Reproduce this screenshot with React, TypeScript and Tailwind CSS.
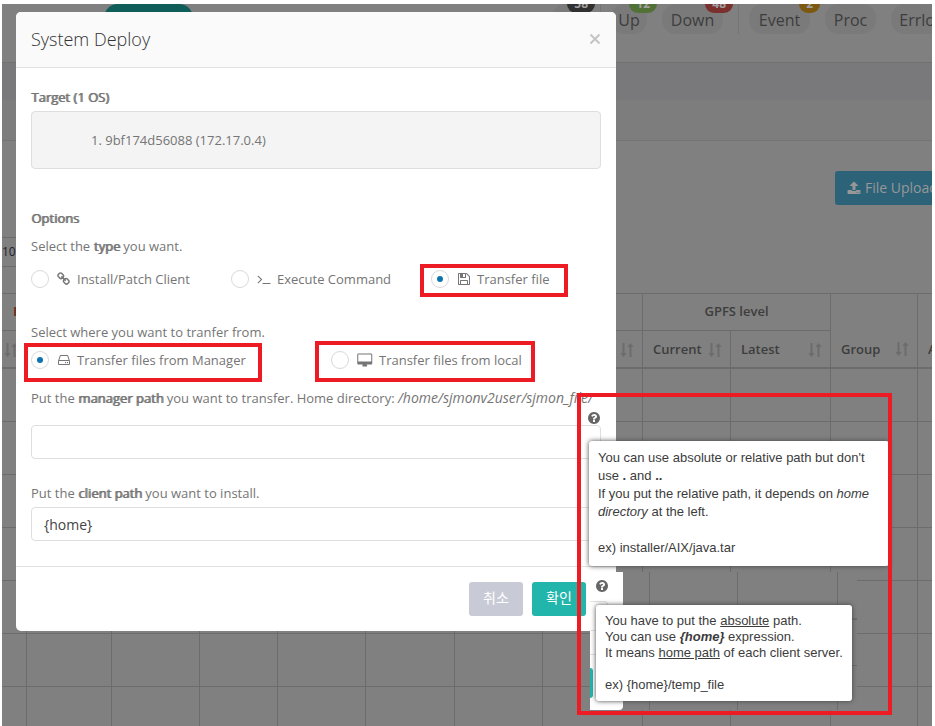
import React from "react";

const ICONS = {
  link: "M1456 1216q0-40-28-68l-208-208q-28-28-68-28-42 0-72 32 3 3 19 18.5t21.5 21.5 15 19 13 25.5 3.5 27.5q0 40-28 68t-68 28q-15 0-27.5-3.5t-25.5-13-19-15-21.5-21.5-18.5-19q-33 31-33 73 0 40 28 68l206 207q27 27 68 27 40 0 68-26l147-146q28-28 28-67zm-703-705q0-40-28-68l-206-207q-28-28-68-28-39 0-68 27l-147 146q-28 28-28 67 0 40 28 68l208 208q27 27 68 27 42 0 72-31-3-3-19-18.5t-21.5-21.5-15-19-13-25.5-3.5-27.5q0-40 28-68t68-28q15 0 27.5 3.5t25.5 13 19 15 21.5 21.5 18.5 19q33-31 33-73zm895 705q0 120-85 203l-147 146q-83 83-203 83-121 0-204-85l-206-207q-83-83-83-203 0-123 88-209l-88-88q-86 88-208 88-120 0-204-84l-208-208q-84-84-84-204t85-203l147-146q83-83 203-83 121 0 204 85l206 207q83 83 83 203 0 123-88 209l88 88q86-88 208-88 120 0 204 84l208 208q84 84 84 204z",
  terminal: "M649 983l-466 466q-10 10-23 10t-23-10l-50-50q-10-10-10-23t10-23l393-393-393-393q-10-10-10-23t10-23l50-50q10-10 23-10t23 10l466 466q10 10 10 23t-10 23zm1079 457v64q0 14-9 23t-23 9h-960q-14 0-23-9t-9-23v-64q0-14 9-23t23-9h960q14 0 23 9t9 23z",
  floppy: "M512 1536h768v-384h-768v384zm896 0h128v-896q0-14-10-38.5t-20-34.5l-281-281q-10-10-34-20t-39-10v416q0 40-28 68t-68 28h-576q-40 0-68-28t-28-68v-416h-128v1280h128v-416q0-40 28-68t68-28h832q40 0 68 28t28 68v416zm-384-928v-320q0-13-9.5-22.5t-22.5-9.5h-192q-13 0-22.5 9.5t-9.5 22.5v320q0 13 9.5 22.5t22.5 9.5h192q13 0 22.5-9.5t9.5-22.5zm640 32v928q0 40-28 68t-68 28h-1344q-40 0-68-28t-28-68v-1344q0-40 28-68t68-28h928q40 0 88 20t76 48l280 280q28 28 48 76t20 88z",
  hdd: "M1168 1216q0 33-23.5 56.5t-56.5 23.5-56.5-23.5-23.5-56.5 23.5-56.5 56.5-23.5 56.5 23.5 23.5 56.5zm256 0q0 33-23.5 56.5t-56.5 23.5-56.5-23.5-23.5-56.5 23.5-56.5 56.5-23.5 56.5 23.5 23.5 56.5zm112 160v-320q0-13-9.5-22.5t-22.5-9.5h-1216q-13 0-22.5 9.5t-9.5 22.5v320q0 13 9.5 22.5t22.5 9.5h1216q13 0 22.5-9.5t9.5-22.5zm-1230-480h1180l-157-482q-4-13-16-21.5t-26-8.5h-782q-14 0-26 8.5t-16 21.5zm1358 160v320q0 66-47 113t-113 47h-1216q-66 0-113-47t-47-113v-320q0-25 16-75l197-606q17-53 63-86t101-33h782q55 0 101 33t63 86l197 606q16 50 16 75z",
  desktop: "M1728 992v-832q0-13-9.500-22.500t-22.500-9.500h-1600q-13 0-22.500 9.500t-9.500 22.500v832q0 13 9.500 22.500t22.500 9.500h1600q13 0 22.500-9.500t9.500-22.500zm128-832v1088q0 66-47 113t-113 47h-544q0 37 16 77.500t32 71 16 43.500q0 26-19 45t-45 19h-512q-26 0-45-19t-19-45q0-14 16-44t32-70 16-78h-544q-66 0-113-47t-47-113v-1088q0-66 47-113t113-47h1600q66 0 113 47t47 113z",
  question: "M1024 1376v-192q0-14-9-23t-23-9h-192q-14 0-23 9t-9 23v192q0 14 9 23t23 9h192q14 0 23-9t9-23zm256-672q0-88-55.500-163t-138.500-116-170-41q-243 0-371 213-15 24 8 42l132 100q7 6 19 6 16 0 25-12 53-68 86-92 34-24 86-24 48 0 85.500 26t37.500 59q0 38-20 61t-68 45q-63 28-115.500 86.500t-52.500 125.500v36q0 14 9 23t23 9h192q14 0 23-9t9-23q0-19 21.500-49.500t54.500-49.500q32-18 49-28.500t46-35 44.500-48 28-60.500 12.500-81zm384 192q0 209-103 385.500t-279.500 279.500-385.500 103-385.500-103-279.500-279.500-103-385.500 103-385.500 279.500-279.500 385.500-103 385.500 103 279.500 279.500 103 385.500z",
  upload: "M1344 1472q0-26-19-45t-45-19-45 19-19 45 19 45 45 19 45-19 19-45zm256 0q0-26-19-45t-45-19-45 19-19 45 19 45 45 19 45-19 19-45zm128-224v320q0 40-28 68t-68 28h-1472q-40 0-68-28t-28-68v-320q0-40 28-68t68-28h427q21 56 70.500 92t110.500 36h256q61 0 110.500-36t70.500-92h427q40 0 68 28t28 68zm-325-648q-17 40-59 40h-256v448q0 26-19 45t-45 19h-256q-26 0-45-19t-19-45v-448h-256q-42 0-59-40-17-39 14-69l448-448q18-19 45-19t45 19l448 448q31 30 14 69z",
};

function Icon({ name, className, box = "0 0 1792 1792" }: { name: keyof typeof ICONS; className: string; box?: string }) {
  return (
    <svg viewBox={box} fill="currentColor" aria-hidden="true" className={className}>
      <path d={ICONS[name]} />
    </svg>
  );
}

function SortIcon() {
  return (
    <svg viewBox="0 0 14 14" fill="#6c6c6c" aria-hidden="true" className="ml-auto size-3.5 shrink-0">
      <path d="M2.500 0h2v10h2.200L3.500 14 .3 10h2.200zM9.500 14h2V4h2.200L10.500 0 7.300 4h2.200z" />
    </svg>
  );
}

function NavPill({ label, badge, width, color = "" }: { label: string; badge?: string; width: string; color?: string }) {
  return (
    <button type="button" className={"relative h-[30px] shrink-0 rounded-[14px] bg-[#7a7a7a] pt-0.5 " + width}>
      <span>{label}</span>
      {badge && (
        <span className={"absolute -top-[9px] right-[-10px] rounded-full px-[7px] text-xs leading-[18px] font-bold text-[#a0a0a0] " + color}>
          {badge}
        </span>
      )}
    </button>
  );
}

const mark = "pointer-events-none absolute border-4 border-[#ed1c24]";
const strong = "font-normal [text-shadow:1px_0_0_#757575]";

function Choice(props: {
  group: string;
  label: string;
  icon: keyof typeof ICONS;
  box?: string;
  iconClass?: string;
  checked?: boolean;
  width: string;
  markClass?: string;
}) {
  return (
    <label className={"relative flex items-center whitespace-nowrap " + props.width}>
      <input
        type="radio"
        name={props.group}
        defaultChecked={props.checked}
        className="mr-2 grid size-[18px] shrink-0 appearance-none place-content-center rounded-full border border-[#d9d9d9] bg-white before:size-1.5 before:rounded-full before:content-[''] checked:before:bg-[#0c75ab]"
      />
      <Icon name={props.icon} box={props.box} className={props.iconClass ?? "mr-1.5 size-3.5 shrink-0"} />
      {props.label}
      {props.markClass && <span className={mark + " " + props.markClass} />}
    </label>
  );
}

const cell = "border-r border-b border-[#6c6c6c]";
const columns = ["w-[25px]", "w-[85px]", "w-[88px]", "w-[78px]", "w-[88px]", "w-[89px]", "w-[88px]", "w-[100px]", "w-[88px]", "w-[100px]", "w-[87px]", "w-[100px]"];
const rows = [1, 2, 3, 4, 5, 6, 7];

function Backdrop() {
  return (
    <div className="h-full overflow-hidden bg-[#808080] text-[#3d3d3d]">
      <header className="flex h-[59px] items-start overflow-hidden border-b border-[#717171] text-base">
        <div className="ml-[102px] h-[30px] w-[89px] rounded-t-[14px] bg-[#0f5e59]" />
        <nav className="mr-[-20px] ml-auto flex shrink-0 gap-[15px]">
          <NavPill label="" badge="58" width="w-[33px]" color="bg-[#303030]" />
          <div className="flex gap-2.5">
            <div className="h-[30px] w-px bg-[#757575]" />
            <NavPill label="Up" badge="12" width="w-[36px]" color="bg-[#527136]" />
          </div>
          <NavPill label="Down" badge="48" width="w-[61px]" color="bg-[#7b302e]" />
          <div className="flex gap-2.5">
            <div className="h-[30px] w-px bg-[#757575]" />
            <NavPill label="Event" badge="2" width="w-[61px]" color="bg-[#7d5810]" />
          </div>
          <NavPill label="Proc" width="w-[51px]" />
          <NavPill label="Errlog" width="w-[61px]" />
        </nav>
      </header>
      <div className="h-[37px] bg-[#79797c]" />
      <div className="h-[41px] border-b border-[#747474] bg-[#7d7d7d]" />
      <div className="flex justify-end pt-[30px]">
        <button type="button" className="mr-[-25px] flex h-[34px] w-[122px] shrink-0 items-center gap-1 rounded-[3px] bg-[#2c6379] pl-3 text-sm whitespace-nowrap text-[#979797]">
          <Icon name="upload" className="size-3.5" />
          File Upload
        </button>
      </div>
      <select aria-label="Rows per page" className="mt-8 block h-[30px] w-16 appearance-none border-y border-[#6c6c6c] text-xs text-[#20202e]">
        <option>10</option>
      </select>
      <table className="mt-[26px] w-full min-w-[1016px] table-fixed border-separate border-spacing-0 border-t border-[#6c6c6c] text-[13px]">
        <colgroup>
          {columns.map((c, i) => (
            <col key={i} className={c} />
          ))}
        </colgroup>
        <thead className="text-left font-semibold">
          <tr className="h-[37px]">
            <th className={cell + " pl-[11px] text-[#6b3020]"}>P</th>
            <th className={cell} colSpan={7} />
            <th className={cell + " text-center font-semibold"} colSpan={2}>GPFS level</th>
            <th className={cell + " border-b-2 pr-2 pb-2 pl-2.5 align-bottom font-semibold"} rowSpan={2}>
              <div className="flex items-center">Group<SortIcon /></div>
            </th>
            <th className={cell + " border-b-2 pr-2 pb-2 pl-2.5 align-bottom font-semibold"} rowSpan={2}>
              <div className="flex items-center">AIX<SortIcon /></div>
            </th>
          </tr>
          <tr className="h-[38px]">
            {["", "", "", "", "", "", "", "", "Current", "Latest"].map((name, i) => (
              <th key={i} className={cell + " border-b-2 pt-0.5 font-semibold " + (name ? "pr-2 pl-2.5" : "pr-2")}>
                <div className="flex items-center">{name}<SortIcon /></div>
              </th>
            ))}
          </tr>
        </thead>
        <tbody>
          {rows.map((r) => (
            <tr key={r} className="h-[53px]">
              {columns.map((c, i) => (
                <td key={i} className={cell} />
              ))}
            </tr>
          ))}
        </tbody>
      </table>
    </div>
  );
}

const tip = "absolute rounded-[3px] bg-white font-['Liberation_Sans',Arial,sans-serif] text-[13px] text-[#3c3c3c] shadow-[0_0_5px_#444]";
const field = "block h-[34px] w-full rounded border border-[#dedede] bg-white px-3 text-sm text-[#444]";

function DeployDialog() {
  return (
    <section role="dialog" aria-labelledby="dialog-title" className="absolute top-3 left-4 w-[600px] rounded-[5px] bg-white text-[13px] leading-5 text-[#757575]">
      <header className="flex h-14 items-center justify-between rounded-t-[5px] border-b border-[#e2e2e2] bg-[#fafafa] px-[15px] pb-0.5">
        <h1 id="dialog-title" className="text-lg font-light text-[#333]">System Deploy</h1>
        <button type="button" aria-label="Close" className="text-[#c4c4c4]">
          <svg viewBox="0 0 12 12" className="size-3" fill="none" stroke="currentColor" strokeWidth="2">
            <path d="M1.500 1.500l9 9M10.500 1.500l-9 9" />
          </svg>
        </button>
      </header>
      <form className="px-[15px] pt-[19px] pb-[25px]">
        <h2 className={strong}>Target (1 OS)</h2>
        <ol className="mt-1 flex h-[58px] list-inside list-decimal items-center rounded border border-[#dedede] bg-[#f4f4f4] pl-[59px]">
          <li>9bf174d56088 (172.17.0.4)</li>
        </ol>
        <h2 className={"mt-[39px] " + strong}>Options</h2>
        <p className="mt-2">Select the <b className={strong}>type</b> you want.</p>
        <div className="mt-[13px] flex h-5">
          <Choice group="type" label="Install/Patch Client" icon="link" width="w-[200px]" />
          <Choice group="type" label="Execute Command" icon="terminal" width="w-[200px]" />
          <Choice group="type" label="Transfer file" icon="floppy" width="w-[118px]" checked markClass="-top-[5px] -left-[11px] h-[33px] w-[148px]" />
        </div>
        <p className="mt-[33px]">Select where you want to tranfer from.</p>
        <div className="mt-2 flex h-5">
          <Choice group="source" label="Transfer files from Manager" icon="hdd" width="w-[300px]" checked markClass="-top-[7px] -left-[7px] h-[39px] w-[238px]" />
          <Choice group="source" label="Transfer files from local" icon="desktop" box="-64 -64 1984 1792" iconClass="mr-1.5 h-3.5 w-4 shrink-0" width="w-[190px]" markClass="-top-[9px] -left-4 h-[41px] w-[220px]" />
        </div>
        <div className="relative mt-[18px]">
          <label htmlFor="manager-path" className="block h-5 whitespace-nowrap">
            Put the <b className={strong}>manager path</b> you want to transfer. Home directory: <i className="text-sm leading-none">/home/sjmonv2user/sjmon_file/</i>
          </label>
          <Icon name="question" className="absolute top-[23px] right-0 size-3.5 text-[#666]" />
          <input id="manager-path" className={"mt-[17px] " + field} />
        </div>
        <label htmlFor="client-path" className="mt-6 block">
          Put the <b className={strong}>client path</b> you want to install.
        </label>
        <input id="client-path" defaultValue="{home}" className={"mt-1 " + field} />
      </form>
      <footer className="flex justify-end gap-[9px] border-t border-[#e2e2e2] px-[30px] py-[15px] font-['Open_Sans','Noto_Sans_CJK_KR',sans-serif] text-sm text-white">
        <button type="button" className="h-[34px] w-[54px] rounded-[3px] bg-[#c8cad6] pb-0.5">취소</button>
        <button type="button" className="h-[34px] w-[54px] rounded-[3px] bg-[#21b5ab] pb-0.5">확인</button>
      </footer>
    </section>
  );
}

function ClientPathInset() {
  return (
    <div className="absolute top-[572px] left-[590px] flex h-[138px] w-[267px] bg-[#808080]">
      <div className="relative w-[33px] rounded-br-[4px] bg-white">
        <Icon name="question" className="absolute top-[7px] right-[14px] size-3.5 text-[#666]" />
        <div className="mt-[29px] mr-[15px] h-[30px] rounded-r border border-l-0 border-[#e2e2e2]" />
        <div className="mt-[23px] border-t border-[#e2e2e2]" />
        <div className="mt-[13px] h-[30px] w-[3px] rounded-r-[3px] bg-[#21b5ab]" />
      </div>
      <div className="w-[27px] border-r border-[#6c6c6c]" />
      <div className="w-[88px] border-r border-[#6c6c6c]" />
      <div className="w-[100px] border-r border-[#6c6c6c]" />
      <div className="flex-1 pt-[46px]">
        <div className="h-12 border-t-2 border-b border-[#6c6c6c]" />
      </div>
    </div>
  );
}

export default function App() {
  return (
    <main className="relative h-screen overflow-hidden bg-white pt-1 pr-[3px] pl-[2px] font-['Open_Sans',sans-serif]">
      <Backdrop />
      <DeployDialog />
      <ClientPathInset />
      <div role="tooltip" className={tip + " top-[441px] left-[589px] w-[300px] px-[9px] pt-2 pb-[9px] leading-[18px]"}>
        You can use absolute or relative path but don't<br />
        use <b>.</b> and <b>..</b><br />
        If you put the relative path, it depends on <i>home<br />directory</i> at the left.<br />
        <br />
        ex) installer/AIX/java.tar
      </div>
      <div role="tooltip" className={tip + " top-[605px] left-[596px] px-[9px] py-2 leading-4"}>
        You have to put the <u>absolute</u> path.<br />
        You can use <b><i>{"{home}"}</i></b> expression.<br />
        It means <u>home path</u> of each client server.<br />
        <br />
        ex) {"{home}"}/temp_file
      </div>
      <div className={mark + " top-[393px] left-[577px] h-[322px] w-[315px]"} />
    </main>
  );
}
